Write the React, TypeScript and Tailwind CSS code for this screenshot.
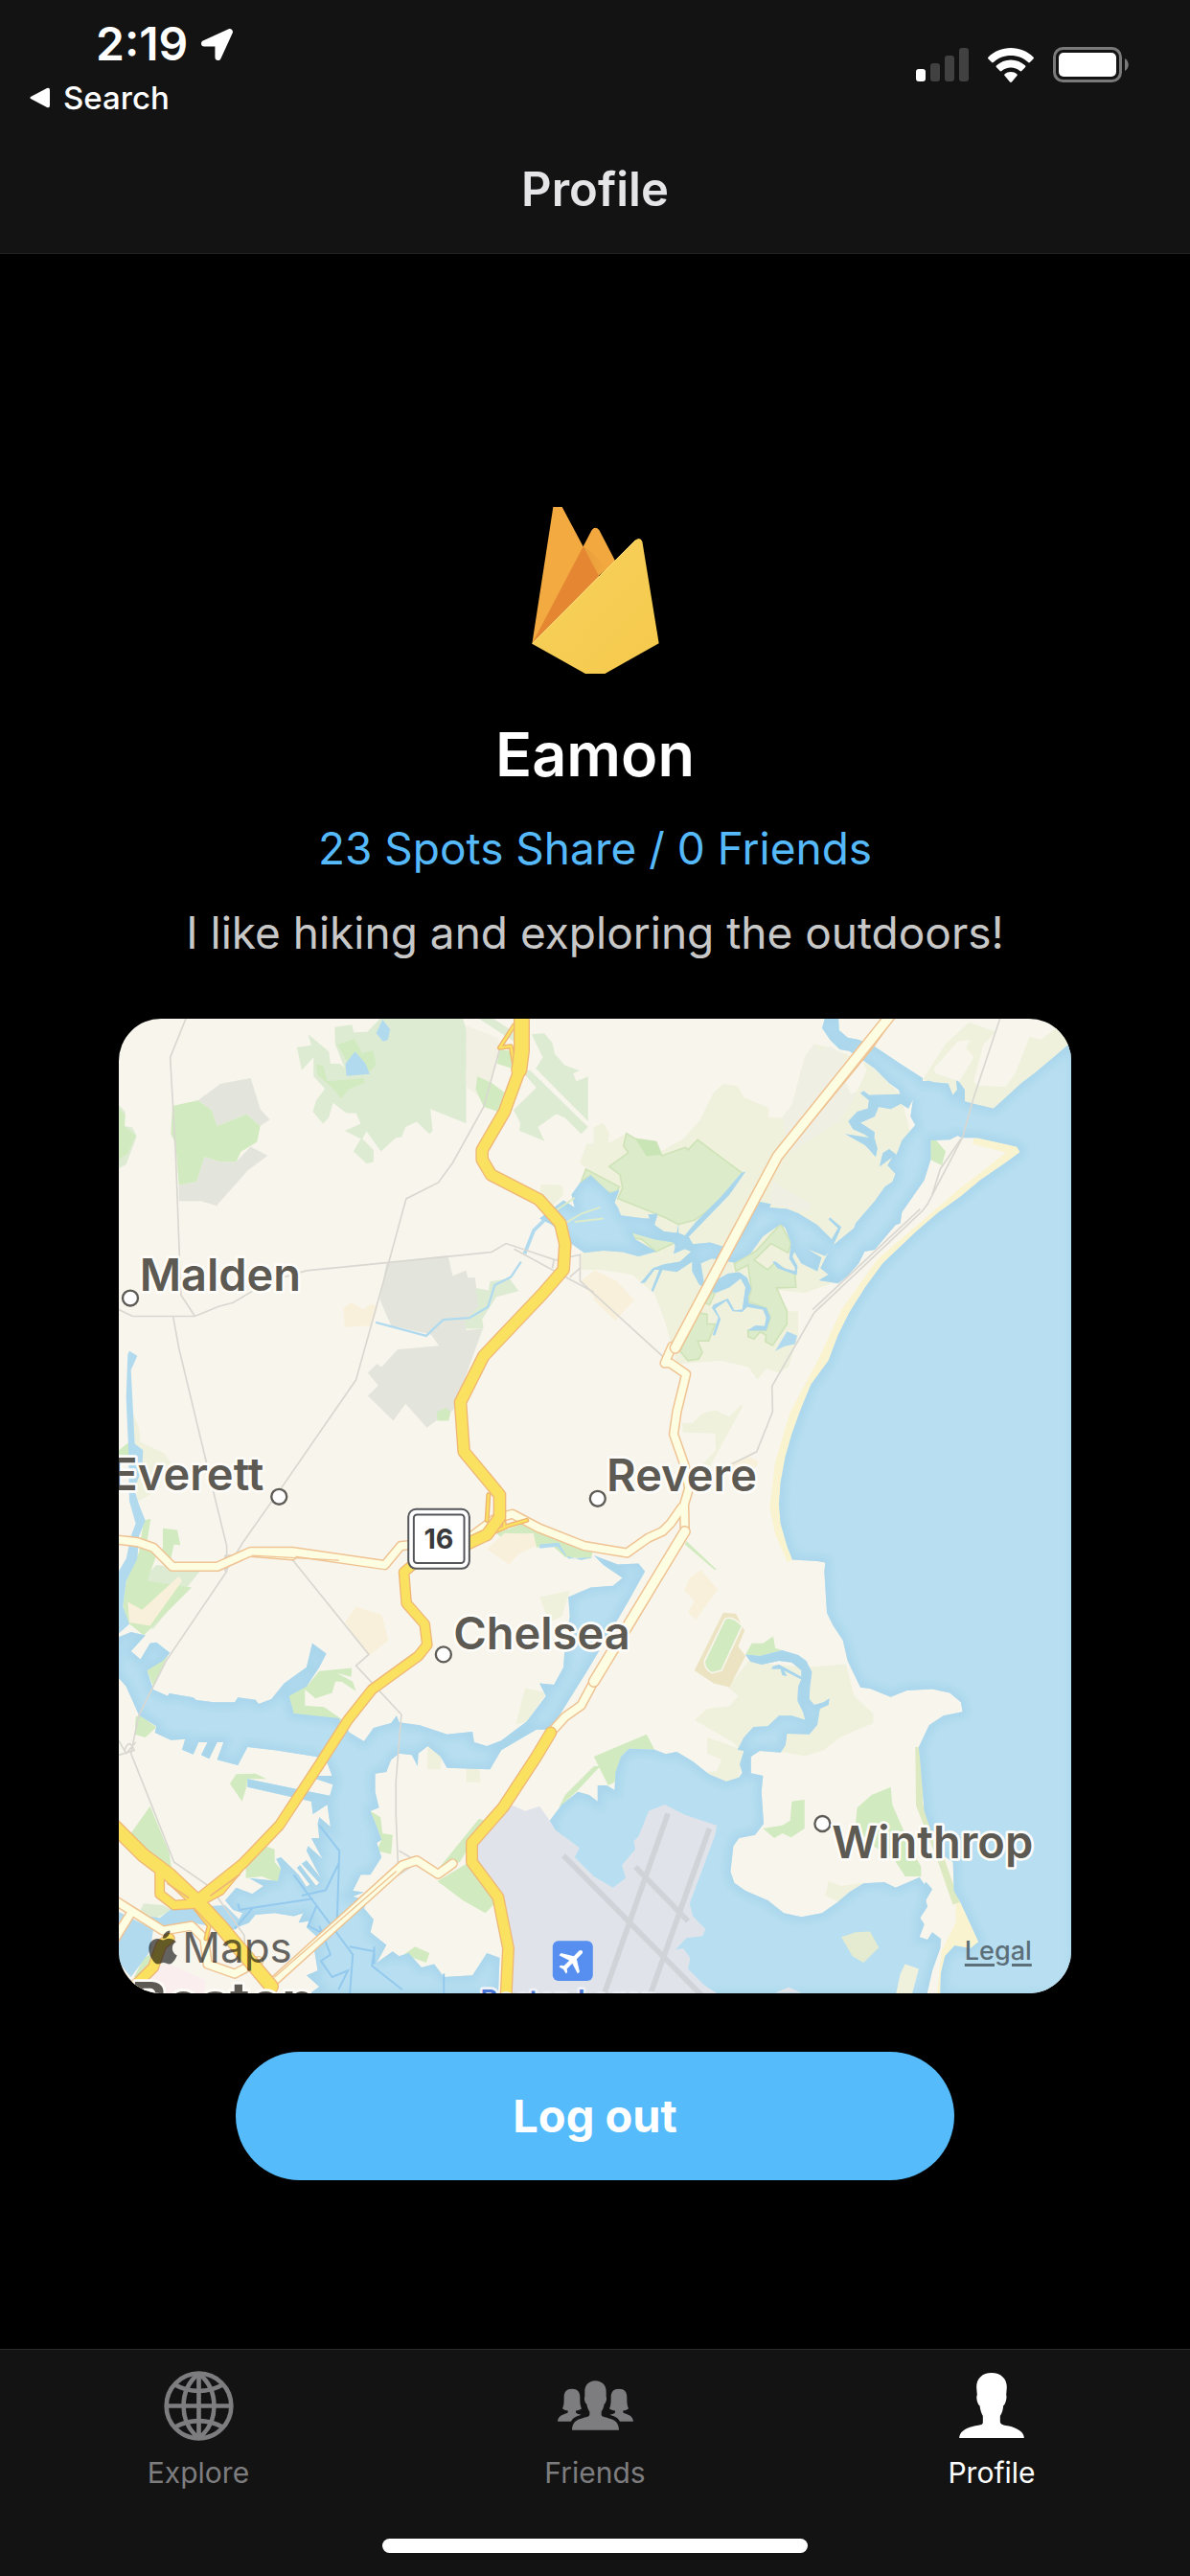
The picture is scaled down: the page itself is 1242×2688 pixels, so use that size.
import React from "react";
import { FaApple, FaLocationArrow } from "react-icons/fa";
import { MdFlight } from "react-icons/md";

function SignalIcon() {
  return (
    <svg viewBox="0 0 55 35" className="h-[35px] w-[55px]" aria-hidden="true">
      <rect x="0" y="22" width="10" height="13" rx="3" fill="#fff" />
      <rect x="15" y="16" width="10" height="19" rx="3" fill="#414141" />
      <rect x="30" y="8" width="10" height="27" rx="3" fill="#414141" />
      <rect x="45" y="0" width="10" height="35" rx="3" fill="#414141" />
    </svg>
  );
}

function WifiIcon() {
  return (
    <svg viewBox="0 0 48 36" className="h-[36px] w-[48px]" aria-hidden="true" fill="#fff">
      <path d="M24 0C15 0 6.700 3.500.600 9.400c-.700.700-.700 1.500-.100 2.100l3.600 3.600c.500.500 1.200.500 1.700 0C10.600 10.600 17 8 24 8s13.400 2.600 18.200 7.100c.500.500 1.200.500 1.700 0l3.600-3.600c.600-.600.600-1.400-.100-2.100C41.300 3.500 33 0 24 0z" />
      <path d="M24 12.400c-5.700 0-11 2.200-14.900 5.800-.700.600-.700 1.400-.100 2l3.700 3.800c.500.500 1.200.500 1.800 0C17 21.700 20.300 20.400 24 20.400s7 1.300 9.500 3.600c.600.500 1.300.500 1.800 0l3.700-3.800c.600-.600.600-1.400-.100-2C35 14.600 29.700 12.400 24 12.400z" />
      <path d="M24 25c-2.400 0-4.600.800-6.300 2.200-.700.500-.700 1.300-.100 1.900l5.400 6.400c.600.600 1.400.600 2 0l5.400-6.400c.600-.600.600-1.400-.100-1.900C28.600 25.800 26.400 25 24 25z" />
    </svg>
  );
}

function BatteryIcon() {
  return (
    <svg viewBox="0 0 79 37" className="h-[37px] w-[79px]" aria-hidden="true">
      <rect x="1.500" y="1.500" width="69" height="34" rx="9" fill="none" stroke="#7a7a7a" strokeWidth="3" />
      <rect x="6" y="6" width="60" height="25" rx="5" fill="#fff" />
      <path d="M75 12c5 3 5 10 0 13z" fill="#7a7a7a" />
    </svg>
  );
}

function FlameLogo() {
  return (
    <svg viewBox="0 0 399 522" className="h-[174px] w-[133px]" role="img" aria-label="Profile picture">
      <defs>
        <linearGradient id="sun" x1="0" y1="0" x2="1" y2="1">
          <stop offset="0" stopColor="#f8d15c" />
          <stop offset="1" stopColor="#f5c94c" />
        </linearGradient>
        <linearGradient id="fold" x1="0" y1="0" x2="1" y2="0">
          <stop offset="0" stopColor="#e0973a" />
          <stop offset="1" stopColor="#f2a93f" />
        </linearGradient>
      </defs>
      <path d="M67 0H95L212 220 1 428z" fill="#f2aa41" />
      <path d="M161 124L188 72Q199 58 211 72L262 170 205 220z" fill="#f2a83e" />
      <path d="M161 124L186 140 236 192 209 216z" fill="url(#fold)" opacity=".6" />
      <path d="M161 124L210 215 1 428z" fill="#e58732" />
      <path d="M1 428L324 104Q339 92 346 108L398 427 229 522H168z" fill="url(#sun)" />
      <path d="M2 427L325 104" stroke="#fbdc7c" strokeWidth="3" />
    </svg>
  );
}

const GRAY = "#7d7d7f";

function GlobeIcon() {
  return (
    <svg viewBox="0 0 220 220" className="h-[73px] w-[73px]" fill="none" stroke={GRAY} strokeWidth="14" aria-hidden="true">
      <circle cx="110" cy="110" r="102" />
      <path d="M110 8V212M8 110H212" />
      <path d="M110 8C46 60 46 160 110 212M110 8C174 60 174 160 110 212" />
      <path d="M33 42C80 70 140 70 187 42M33 178C80 150 140 150 187 178" />
    </svg>
  );
}

function FriendsIcon() {
  return (
    <svg viewBox="183 163 237 155" className="h-[52px] w-[79px]" fill={GRAY} aria-hidden="true">
      <path d="M301 163C280 163 267 178 268 198V213C265 218 268 233 274 237C276 247 279 256 283 260V270C282 275 278 276 262 280C240 284 228 296 228 318H375C375 296 363 284 341 280C325 276 321 275 320 270V260C324 256 327 247 329 237C335 233 338 218 335 213V198C336 178 322 163 301 163z" />
      <path d="M228 189C211 189 203 199 203 214C203 230 203 240 198 250C204 255 209 256 215 257V263C205 269 184 270 183 291H225C231 280 240 275 257 270C248 267 241 266 240 262V257C248 256 253 254 258 250C253 240 253 230 253 214C253 199 245 189 228 189z" />
      <path transform="translate(603 0) scale(-1 1)" d="M228 189C211 189 203 199 203 214C203 230 203 240 198 250C204 255 209 256 215 257V263C205 269 184 270 183 291H225C231 280 240 275 257 270C248 267 241 266 240 262V257C248 256 253 254 258 250C253 240 253 230 253 214C253 199 245 189 228 189z" />
    </svg>
  );
}

function PersonIcon() {
  return (
    <svg viewBox="180 138 203 204" className="h-[68px] w-[68px]" fill="#fff" aria-hidden="true">
      <path d="M281 138C252 138 234 156 234 183L236 207C232 212 236 235 244 241C246 255 249 265 254 273V293C254 300 246 301 236 303C208 307 180 320 180 342H383C383 320 354 307 326 303C316 301 308 298 308 290V273C314 265 317 255 318 241C326 235 330 212 327 207L329 183C329 156 310 138 281 138z" />
    </svg>
  );
}

/* Map geometry: one unit is a third of a pixel at the card's natural size. */
const OCEAN =
  "M3010 70L2940 130 2880 180 2840 210 2752 290 2690 275 2662 268 2662 232 2645 208 2635 202 2638 232 2624 248 2610 212 2565 208 2550 203 2530 205 2530 195 2460 150 2400 110 2370 90 2330 75 2295 68 2268 45 2266 0 2226 0 2215 38 2240 75 2270 105 2300 110 2345 140 2380 165 2425 210 2455 232 2460 245 2362 248 2345 235 2335 242 2362 265 2358 290 2325 300 2297 330 2312 355 2350 372 2362 382 2287 370 2350 405 2383 442 2388 415 2378 380 2380 365 2335 335 2380 315 2392 285 2430 292 2462 275 2485 290 2500 262 2492 315 2507 342 2465 390 2448 435 2425 417 2405 430 2395 472 2435 443 2420 468 2445 495 2435 520 2412 535 2380 580 2320 650 2315 665 2250 718 2275 662 2240 632 2235 637 2265 665 2245 700 2200 655 2140 618 2105 605 2050 600 2055 590 2020 582 1950 690 1902 722 1865 710 1810 715 1797 692 1925 560 1975 488 1962 492 1900 565 1820 645 1785 688 1765 680 1765 652 1760 680 1720 675 1690 655 1700 620 1670 622 1675 635 1660 635 1585 625 1575 600 1565 585 1580 545 1550 555 1490 500 1455 525 1430 560 1440 600 1405 578 1330 635 1370 655 1410 700 1470 742 1530 735 1590 740 1640 753 1695 738 1630 700 1620 680 1690 700 1750 710 1755 720 1750 745 1785 730 1805 738 1770 770 1720 778 1685 790 1645 838 1660 835 1690 795 1705 795 1680 860 1685 865 1715 795 1760 802 1808 770 1808 800 1830 842 1880 868 1925 850 1960 822 1975 850 1965 920 1940 922 1920 885 1875 905 1870 915 1890 945 1872 1000 1880 1000 1897 950 1880 917 1915 892 1935 925 1965 927 1980 912 2030 920 2040 945 2035 972 2005 970 1982 985 2040 985 2053 945 2040 915 1985 900 1983 880 1993 855 1980 820 1955 803 1920 807 1880 830 1845 835 1835 775 1870 760 1940 773 1990 745 2030 690 2085 652 2100 665 2118 712 2112 760 2130 788 2130 800 2095 790 2070 770 2060 770 2075 790 2135 812 2138 785 2122 755 2128 738 2150 775 2200 800 2213 757 2168 730 2225 752 2235 740 2210 790 2235 810 2205 828 2265 838 2295 815 2330 775 2348 738 2380 732 2445 655 2460 650 2465 615 2535 515 2555 450 2555 390 2615 388 2640 375 2652 382 2700 382 2825 410 2835 427 2790 460 2710 515 2650 565 2580 615 2510 675 2405 775 2350 850 2300 930 2265 1000 2235 1080 2180 1155 2145 1240 2120 1310 2100 1380 2085 1460 2080 1530 2085 1590 2105 1660 2122 1703 2200 1708 2225 1712 2222 1740 2230 1870 2250 1910 2280 1955 2295 2020 2335 2103 2365 2107 2430 2133 2480 2113 2560 2108 2615 2120 2650 2150 2655 2180 2595 2192 2550 2222 2518 2290 2523 2340 2535 2490 2580 2620 2625 2650 2628 2740 2650 2780 2705 2900 2680 2920 2630 2912 2600 2945 2587 3000 2585 3070 3010 3070z";

const BAY =
  "M1362 2520L1400 2470 1450 2430 1485 2440 1512 2460 1512 2410 1540 2410 1565 2425 1568 2370 1585 2320 1610 2295 1690 2298 1725 2312 1760 2305 1810 2335 1860 2375 1915 2398 1955 2385 1965 2370 1957 2345 1970 2302 1950 2298 1970 2260 2000 2227 2045 2225 2080 2192 2120 2192 2162 2205 2155 2180 2138 2145 2140 2100 2150 2078 2095 2050 2105 2068 2090 2065 2085 2045 2057 2045 2060 2038 2080 2032 2150 2070 2150 2050 2120 2025 2080 2020 2025 2032 1990 2022 1975 2000 2020 2005 2090 1987 2140 2002 2165 2020 2183 2055 2177 2100 2175 2140 2190 2158 2220 2150 2238 2138 2235 2158 2208 2170 2200 2220 2175 2250 2105 2248 2100 2285 2085 2307 2020 2302 1992 2320 1992 2372 2030 2380 2025 2430 2032 2530 2005 2565 1955 2575 1937 2600 1928 2680 1940 2715 1975 2740 2045 2770 2095 2810 2150 2822 2215 2810 2265 2775 2300 2745 2345 2717 2410 2713 2445 2730 2520 2698 2535 2720 2540 2712 2560 2735 2540 2770 2545 2790 2522 2825 2535 2845 2520 2885 2545 2893 2560 2870 2587 2890 2585 2920 2560 2990 2542 3070 1300 3070 1400 2700z";

const HARBOR =
  "M0 1950L50 1930 95 1940 50 1990 80 2015 110 1965 130 1962 172 1995 150 2020 100 2050 120 2110 165 2130 170 2122 245 2135 255 2143 310 2150 375 2150 385 2135 440 2142 450 2155 490 2140 530 2090 600 2040 618 1965 662 1997 640 2040 600 2100 545 2130 560 2185 700 2200 735 2245 780 2272 810 2230 865 2215 882 2192 890 2213 955 2222 1040 2250 1120 2242 1125 2275 1165 2287 1210 2270 1290 2210 1350 2130 1330 2090 1375 2095 1405 2040 1410 1960 1425 1880 1420 1820 1490 1790 1560 1785 1590 1760 1530 1720 1500 1690 1575 1718 1640 1715 1660 1740 1610 1830 1575 1890 1480 2050 1380 2210 1365 2235 1320 2235 1210 2300 1175 2360 1040 2355 1020 2320 980 2287 950 2310 948 2350 930 2315 890 2310 865 2330 850 2368 815 2373 815 2430 827 2480 800 2490 820 2540 835 2580 820 2590 835 2635 800 2690 770 2690 745 2740 780 2745 745 2758 790 2770 780 2795 810 2830 800 2870 850 2910 820 2965 870 2930 890 2945 920 2935 960 2980 1000 2970 1030 3010 1120 3005 1165 2935 1205 2950 1200 3070 600 3070 640 3040 600 3005 635 2990 625 2930 640 2890 600 2855 610 2835 575 2840 590 2810 560 2820 500 2810 440 2815 420 2840 370 2860 400 2810 370 2800 345 2770 380 2730 430 2750 465 2725 420 2700 510 2710 520 2670 505 2640 520 2635 575 2690 600 2728 610 2720 570 2668 580 2660 630 2725 640 2715 585 2655 600 2645 645 2700 600 2615 605 2600 650 2640 615 2575 640 2575 635 2530 640 2510 675 2540 665 2470 620 2500 615 2460 415 2415 415 2390 560 2420 673 2442 683 2408 630 2390 635 2380 680 2380 665 2340 630 2320 500 2300 415 2290 385 2347 320 2330 340 2275 320 2275 295 2327 270 2315 290 2275 262 2275 245 2313 210 2298 220 2265 175 2268 125 2245 130 2225 75 2190 35 2100 0 2060z";

const RIVERS =
  "M45 1050L70 1065 50 1110 62 1340 88 1360 85 1420 60 1480 75 1530 95 1580 75 1630 70 1700 35 1770 25 1850 45 1905 0 1945V1760L35 1700 50 1630 65 1590 45 1520 42 1350 35 1195 40 1060z M80 2815L140 2825 180 2795 345 2785 390 2830 370 2865 240 2840 150 2870z M0 2800L120 2860 110 2930 50 3010 0 2950z M838 12L862 42 855 75 840 80 818 55z M752 112L785 150 798 182 725 188 722 150z M2105 988L2137 1002 2130 1028 2098 1035 2068 1050z M1330 1655L1390 1650 1420 1700 1500 1695 1460 1705 1410 1690 1385 1662 1330 1668z";

const WOODS =
  "M570 98L615 92 605 58 670 112 675 150 705 150 720 165 690 90 688 35 742 28 748 52 790 50 830 9 1090 9 1103 50 1100 110 1122 138 1100 170 1100 337 988 292 995 360 985 370 945 332 910 348 898 380 880 382 833 425 788 362 775 385 810 420 810 458 788 462 747 425 770 385 720 360 770 338 755 305 725 305 683 272 670 318 652 338 620 300 630 265 658 228 622 190 622 130 585 170z M1305 58L1345 55 1370 85 1378 120 1410 155 1455 172 1435 180 1445 205 1482 190V330L1318 165 1340 130z M1272 170L1300 170 1482 348 1460 370 1410 320 1382 308 1325 348 1345 392 1267 360 1270 335 1248 295 1320 225z M1140 9L1185 9 1250 50 1250 80z M1120 850L1170 860 1175 832 1235 822 1265 862 1195 880 1150 950 1155 980 1090 980z M12 280L32 300 30 345 55 350 68 378 35 465 12 478z M75 2810L90 2780 150 2785 180 2800 130 2825z M100 1750L130 1720 270 1735 120 1920 60 1910z";

const MARSH =
  "M1500 400L1545 400 1600 370 1700 430 1780 385 1830 330 1875 240 1905 213 1950 220 1970 255 2048 288 2048 320 2090 318 2120 280 2160 130 2190 88 2240 100 2340 140 2380 165 2425 210 2460 245 2500 400 2400 600 2240 840 2160 867 2080 860 2105 925 2140 925 2140 1000 2110 1100 2080 1118 2040 1105 2012 1140 1985 1100 1900 1080 1760 1090 1720 950 1690 870 1620 810 1520 795 1460 795 1460 742 1500 735 1480 480 1455 460 1478 400z M1500 350L1528 335 1548 365 1545 420 1500 435z M2530 200L2600 90 2675 20 2760 50 2720 90 2690 205 2700 218 2790 222 2820 180 2865 65 2900 75 2960 30 3000 9V80L2752 292 2662 268z M1775 1275L1810 1275 1840 1245 1880 1235 1925 1255 1960 1218 1967 1222 1865 1408 1840 1405 1882 1360 1880 1308 1780 1305z M1815 2205L1855 2170 1925 2162 1952 2130 1920 2102 1985 2020 2060 2030 2165 2040 2290 2030 2315 2130 2375 2185 2375 2215 2270 2260 2220 2300 2160 2318 2085 2305 1960 2300 1935 2275z M1855 2260L1900 2275 1968 2300 1955 2385 1915 2400 1840 2370 1885 2365 1900 2330 1855 2310z M2235 2710L2275 2725 2345 2715 2300 2750 2265 2775 2225 2755z M1285 2105L1352 2120 1290 2210 1255 2220z M1330 1820L1425 1800 1400 1880 1360 1900z M55 1240L75 1290 80 1335 155 1370 175 1400 110 1500 70 1520z M1335 528L1400 530 1405 560 1365 600 1330 560z M980 2285L1025 2290 1020 2360 978 2360z M1100 2340L1140 2345 1145 2400 1100 2400z";

const PARKS =
  "M180 282L260 265 302 295 320 345 412 308 455 345 445 395 395 425 380 457 330 457 280 442 255 520 200 530 190 400 175 370z M697 90L750 72 775 118 808 108 818 152 798 175 765 140 725 140z M630 152L652 155 665 205 780 195 783 210 735 228 708 258 680 225 635 185z M1205 105L1240 110 1245 165 1197 150z M1135 190L1180 210 1220 240 1200 300 1155 285 1130 230z M12 290L32 310 30 345 65 375 40 430 12 450z M1008 1240L1035 1228 1052 1240 1045 1268 1010 1268z M12 1360L45 1335 45 1380 12 1390z M150 1605L195 1610 205 1658 185 1655 175 1700 130 1690 100 1770 240 1790 90 1940 40 1900 25 1850 35 1770 75 1680 90 1580 112 1575 100 1650 150 1670z M172 1990L120 2100 100 2050z M545 2120L605 2095 640 2052 742 2042 740 2070 695 2058 745 2085 755 2115 710 2085 690 2085 680 2120 628 2138 595 2110 595 2160 655 2165 720 2210 570 2198 538 2160z M65 2195L80 2192 130 2228 95 2260 62 2250z M360 2405L380 2375 440 2373 475 2390 415 2390 412 2415 398 2460z M50 2560L110 2475 170 2620 180 2690 60 2580z M410 2640L470 2600 500 2610 500 2650 522 2675 510 2715 460 2695 410 2700z M800 2490L832 2510 838 2560 870 2565 865 2625 820 2615 835 2580z M1010 2675L1140 2515 1160 2520 1080 2650z M1010 2710L1110 2650 1200 2770 1160 2810 1090 2770z M905 2940L940 2915 985 2935 975 2965z M60 3010L90 2950 130 2930 115 3010z M1195 1620L1280 1590 1370 1625 1500 1670 1490 1700 1410 1695 1370 1660 1320 1665 1310 1620 1210 1635z M2555 390L2570 387 2602 425 2590 468 2553 450z M1500 2320L1665 2250 1690 2298 1610 2295 1585 2320 1565 2400 1545 2410z M1390 2480L1410 2440 1500 2350 1520 2350 1450 2425z M1975 2000L1995 1965 2030 1965 2062 1943 2068 1980 2090 1987 2020 2005z M2120 2460L2160 2455 2160 2545 2118 2573 2090 2560 2065 2575 2030 2545 2090 2535 2115 2520z M2325 2480L2370 2440 2430 2415 2435 2470 2500 2620 2525 2665 2525 2695 2475 2695 2440 2640 2360 2590 2320 2530z M1790 1645L1885 1735 1878 1735 1785 1655z";

const BOG =
  "M1602 368L1630 385 1695 395 1713 438 1787 412 1795 420 1825 388 1965 493 1900 580 1815 640 1765 653 1720 630 1575 572 1590 540 1582 498 1548 472 1608 428 1593 408z M2085 652L2118 712 2108 742 2055 713 2002 765 2045 795 2065 775 2130 810 2133 850 2072 852 2105 925 2105 965 2060 1032 2037 1020 2040 1000 2020 990 2002 1012 1983 1005V985L2040 985 2053 945 2040 915 1983 895 1993 855 1983 780 1945 800 1940 775 2010 735z M1625 658L1680 670 1755 710 1695 738 1650 700 1620 695z M1830 930L1855 935 1855 965 1880 965 1860 1018 1825 1018 1840 1055 1828 1075 1795 1080 1770 1050z M1475 480L1580 535 1570 555 1540 550 1490 500 1460 520z M1850 900L1870 865 1878 872 1862 905z";

const CEMETERIES =
  "M260 265L330 213 425 195 455 292 485 325 455 345 412 308 320 345 302 295z M200 530L255 520 280 442 330 457 380 457 425 410 478 438 415 485 318 595 270 580 200 580z M850 772L1043 750 1058 815 1100 797 1105 820 1128 820 1138 910 1095 955 1100 985 1152 980 1060 1235 1010 1265 977 1290 910 1215 872 1268 792 1190 825 1158 792 1118 820 1090 835 1100 885 1045 1015 1033 990 998 865 970 830 890z";

const BLOCKS =
  "M715 918L738 897 780 920 800 902 825 908 805 970 720 975z M720 1900L755 1850 835 1875 857 1955 795 2005z M1165 1670L1220 1620 1310 1622 1320 1660 1265 1685 1235 1718z M40 1835L85 1860 200 1755 210 1770 110 1910 45 1900z M1500 795L1570 830 1627 890 1567 955 1500 890z M1460 830L1500 800V880L1470 850z M1783 1800L1800 1760 1835 1735 1888 1797 1820 1890 1795 1870 1815 1832z M1925 1400L1980 1380 2015 1395 2010 1410 1970 1440 1930 1455z";

const AIRPORT =
  "M1240 2470L1285 2490 1330 2475 1362 2520 1380 2550 1455 2605 1440 2635 1500 2695 1560 2730 1600 2700 1588 2660 1630 2610 1625 2585 1640 2570 1672 2490 1722 2470 1785 2502 1885 2535 1880 2565 1800 2780 1810 2820 1850 2860 1840 2882 1790 2888 1755 2925 1780 2920 1802 2950 1795 2985 1845 3035 1900 3070H1220L1232 2910 1200 2760 1118 2650V2590z";

const RAILS = [
  "M222 9L173 130 190 430 203 780 207 875 250 940",
  "M12 920L55 941H250L325 910 370 898 480 833 600 798 850 773 1180 740 1225 713 1380 765 1457 748V830L1500 870 1720 1070",
  "M182 941L200 1040 318 1530 350 1660 350 1740 160 2020 75 2190 50 2310 110 2460 185 2650 300 2730 405 2880 410 3000",
  "M1205 105L1155 285 1058 460 1013 522 912 573 850 800 755 1140 520 1480 400 1650 350 1735",
  "M1250 730L1415 820 1500 865",
  "M2775 0L2690 255 2655 380 2545 590 2530 610 2190 930 2058 1160 2060 1240 2010 1365 1880 1430",
  "M2650 385L2585 480 2560 560",
  "M2522 605L2185 920",
  "M545 1690L795 2000 755 2035 897 2188 880 2400 880 2500 888 2690 950 2650 890 2615",
  "M1370 790L1375 765 M1425 818L1457 790",
];

const FERRIES =
  "M640 2535L703 2615 695 2850 M703 2650L660 2738 585 2755 M385 2780L390 2800 620 2765 M430 2795L375 2860 M560 2690L745 2940 735 3070 M630 2790L605 2850 675 2885 M640 2850L675 2940 645 2960 680 3010 730 2990 700 3050 M735 2915L812 2930 805 2975 900 3050 M812 2915V2970 M1030 3000V3070";

const LOCAL_ROADS = [
  "M2428 0L2360 95 2075 440 1910 750 1755 1040",
  "M1745 1035L1722 1088 1740 1088 1789 1122 1760 1240 1750 1310 1785 1410 1798 1480 1783 1530 1785 1615 1600 1925 1500 2085 1460 2160 1410 2195 1365 2245",
  "M0 1640L70 1648 120 1665 180 1725 320 1725 425 1678 555 1678 845 1720 895 1660 950 1655",
  "M555 1690L425 1680",
  "M1110 1635L1190 1575 1245 1560 1330 1605 1470 1660 1604 1682 1670 1635 1715 1615 1740 1590 1775 1540",
  "M485 3035L900 2660 945 2645 1012 2688 1058 2655",
  "M0 2770L55 2805 150 2865 240 2850 280 2890 290 2970 375 3000 450 2960",
  "M50 2810L0 2890",
];

const HIGHWAYS = [
  { d: "M1274 0V120L1262 185 1220 300 1150 420V450L1178 498 1328 575 1395 650 1410 715 1405 795 1340 870 1155 1065 1082 1210 1093 1365 1205 1500V1570L1165 1625 1100 1655", w: 34 },
  { d: "M1274 0V110L1266 170", w: 44 },
  { d: "M950 1705L905 1742 913 1840 970 1905 978 1970 950 2005 805 2110 730 2205 640 2345 515 2535 400 2655 255 2770", w: 28 },
  { d: "M400 2655L330 2740 265 2775", w: 24 },
  { d: "M1365 2245L1320 2320 1215 2480 1118 2590V2650L1200 2760 1232 2920 1225 3070", w: 32 },
  { d: "M0 2540L90 2630 170 2690 255 2770 330 2850 490 3040", w: 40 },
  { d: "M140 2680V2750L185 2785 260 2780", w: 26 },
  { d: "M60 3040L120 2980 145 2910 170 2890", w: 30 },
];

const RAMPS = "M1250 30L1205 100 1240 95 1250 150 M1170 1500L1165 1580 M1210 1500L1220 1600 1290 1580 M1225 1600L1190 1615 M240 2780L295 2850 285 2890";

function Town({ name, x, y, cx, cy }: { name: string; x: number; y: number; cx: number; cy: number }) {
  return (
    <g>
      <circle cx={cx} cy={cy} r="24" fill="#fff" stroke="#5f5c57" strokeWidth="7" paintOrder="normal" />
      <text x={x} y={y}>{name}</text>
    </g>
  );
}

function MapCard() {
  return (
    <section aria-label="Map" className="relative mt-[60px] aspect-[994/1017] w-4/5 overflow-hidden rounded-[44px] bg-[#f8f5ec]">
      <svg viewBox="12 9 2982 3051" preserveAspectRatio="xMidYMid slice" className="block h-full w-full">
        <defs>
          <clipPath id="sea">
            <path d={OCEAN} />
            <path d={BAY} />
            <path d={HARBOR} />
          </clipPath>
          <filter id="soft" x="-10%" y="-10%" width="120%" height="120%">
            <feGaussianBlur stdDeviation="14" />
          </filter>
        </defs>

        <path d={WOODS} fill="#ddebd3" />
        <path d="M1100 30L1200 70 1205 110 1160 270 1100 220z" fill="#f2efe3" />
        <path d={CEMETERIES} fill="#e3e4dc" />
        <path d={MARSH} fill="#f0f1dc" />
        <path d="M2160 130L2190 88 2210 110 2240 95 2280 120 2320 250 2270 330 2110 430 2090 318 2120 280z M2060 520L2180 590 2170 615 2050 590z" fill="#f0efe4" />
        <path d="M2340 140L2355 170 2325 235 2305 245 2290 210z M2565 165L2640 80 2680 75 2665 100 2690 130 2645 205 2570 180z" fill="#f8f5ec" />
        <path d={PARKS} fill="#d1eabf" />
        <path d={BOG} fill="#dcebc9" stroke="#cfe3b8" strokeWidth="5" />
        <path d="M1630 385L1695 395 1713 435 1665 440z" fill="#c9e5b5" />
        <path d={BLOCKS} fill="#f8f0da" />
        <path d="M125 2990L160 2965 285 3020 280 3070H100z" fill="#fbeeee" />
        <path d="M1905 1870L1945 1872 1972 1925 1952 1975 1975 2005 1925 2102 1875 2090 1815 2050z" fill="#ebe3c1" />
        <path d="M1910 1890Q1930 1875 1965 1910L1900 2050 1870 2058Q1845 2045 1847 2020z" fill="#d1eabf" stroke="#f8f5ec" strokeWidth="5" />
        <path d="M2690 385L2830 420 2650 560 2400 775 2290 930 2220 1080 2130 1250 2085 1400 2068 1540 2085 1620 2122 1705" fill="none" stroke="#f9f3d0" strokeWidth="34" strokeLinejoin="round" />
        <path d="M2640 2775L2710 2905 2680 2920 2620 2910 2580 3070 2595 2930 2640 2840z" fill="#f9f3d0" stroke="#f9f3d0" strokeWidth="12" />
        <path d="M2518 2290L2520 2470 2590 2650 2635 2780" fill="none" stroke="#dde9c0" strokeWidth="22" />

        <path d={RIVERS} fill="#b1daee" />
        <g clipPath="url(#sea)">
          <rect width="3010" height="3080" fill="#b8dff1" />
          <g fill="none" stroke="#a9d5eb" strokeWidth="34" filter="url(#soft)">
            <path d={OCEAN} />
            <path d={BAY} />
            <path d={HARBOR} />
          </g>
        </g>
        <path d="M817 960L975 1002 1028 952 1110 946 1168 912 1190 843 1240 818 1272 770" fill="none" stroke="#b1daee" strokeWidth="7" />
        <path d="M1283 745L1312 672 1345 640" fill="none" stroke="#b1daee" strokeWidth="11" />
        <path d="M1380 610L1440 570M1410 650L1460 620 1520 600M1440 645L1530 635" fill="none" stroke="#dcebc9" strokeWidth="6" />
        <path d="M2275 2885L2320 2870 2365 2868 2393 2918 2345 2965 2310 2945z" fill="#e4ebd0" />
        <path d="M2475 2970L2518 2985 2495 3070H2445L2460 3000z" fill="#f0f1dc" />
        <path d="M2068 3060L2110 3042 2150 3060z" fill="#e0e4ea" />
        <path d={FERRIES} fill="none" stroke="#94c9ee" strokeWidth="6" />
        <path d={AIRPORT} fill="#e0e4ea" />
        <path d="M1405 2630L1840 3070M1630 2665L1795 2835M1732 2498L1530 3070M1862 2545L1675 3070" fill="none" stroke="#d0d3d8" strokeWidth="17" />

        <g fill="none" stroke="#d9d7d1" strokeWidth="5">
          {RAILS.map((d) => <path key={d} d={d} />)}
          <path d="M12 2270L35 2310 65 2275M30 2300Q45 2260 60 2300L12 2315M345 1690H400M345 1690V1740" />
        </g>

        <g fill="none" strokeLinejoin="round" strokeLinecap="round">
          {LOCAL_ROADS.map((d) => <path key={d} d={d} stroke="#efc393" strokeWidth="32" />)}
          {LOCAL_ROADS.map((d) => <path key={d} d={d} stroke="#fdfde1" strokeWidth="23" />)}
          <path d="M1785 1615L1500 2085M2428 0L2075 440 1755 1040" stroke="#efc393" strokeWidth="37" />
          <path d="M1785 1615L1500 2085M2428 0L2075 440 1755 1040" stroke="#fdfde1" strokeWidth="28" />
          <path d="M430 1690L700 1705M500 3010L880 2680" stroke="#efc393" strokeWidth="4" />
          <path d={RAMPS} stroke="#efb56f" strokeWidth="15" />
          <path d={RAMPS} stroke="#fae160" strokeWidth="7" />
          {HIGHWAYS.map((h) => <path key={h.d} d={h.d} stroke="#efb777" strokeWidth={h.w + 7} />)}
          {HIGHWAYS.map((h) => <path key={h.d} d={h.d} stroke="#fae160" strokeWidth={h.w - 1} />)}
          <path d="M165 2718L230 2762M390 2690L300 2755" stroke="#efb777" strokeWidth="5" />
        </g>

        <g fontFamily="Inter, 'Liberation Sans', sans-serif" fontSize="141" fontWeight="600" fill="#5d5a54" stroke="#fdfcf8" strokeWidth="16" strokeLinejoin="round" paintOrder="stroke">
          <Town name="Malden" x={77} y={861} cx={48} cy={884} />
          <Town name="Everett" x={-14} y={1486} cx={514} cy={1506} />
          <Town name="Revere" x={1540} y={1490} cx={1512} cy={1512} />
          <Town name="Chelsea" x={1060} y={1984} cx={1029} cy={2000} />
          <Town name="Winthrop" x={2246} y={2638} cx={2216} cy={2530} />
          <text x="52" y="3148" fontSize="168" fontWeight="700">Boston</text>
          <text x="1145" y="3112" fontSize="84" fill="#4a78d8" stroke="#eef1f8">Boston Logan</text>
        </g>

        <g>
          <rect x="919" y="1545" width="191" height="186" rx="24" fill="#fff" stroke="#55565a" strokeWidth="6" />
          <rect x="936" y="1562" width="158" height="152" rx="10" fill="#fff" stroke="#55565a" strokeWidth="6" />
          <text x="1014" y="1670" textAnchor="middle" fontFamily="Inter, sans-serif" fontSize="86" fontWeight="700" fill="#3a3a3c">16</text>
        </g>
        <rect x="1371" y="2897" width="126" height="125" rx="18" fill="#568ff0" />
        <g transform="translate(1434 2960) rotate(45)">
          <MdFlight x="-52" y="-52" size={104} color="#fff" />
        </g>
      </svg>
      <div className="absolute inset-x-0 bottom-0 flex items-end justify-between pb-[26px] pl-[26px] pr-[41px] text-black/60">
        <div className="flex items-center">
          <FaApple size={40} aria-hidden="true" />
          <span className="text-[44px] leading-[44px]">Maps</span>
        </div>
        <a href="#legal" className="text-[27px] font-medium leading-[36px] text-[#5c6f79] underline decoration-[3px] underline-offset-4">Legal</a>
      </div>
    </section>
  );
}

function Tab({ label, active, children }: { label: string; active?: boolean; children: React.ReactNode }) {
  return (
    <a
      href={"#" + label.toLowerCase()}
      aria-current={active ? "page" : undefined}
      className={"flex flex-1 flex-col items-center gap-[10px] text-[30px] leading-[40px] " + (active ? "text-white" : "text-[#7d7d7f]")}
    >
      <span className="flex h-[80px] items-center">{children}</span>
      {label}
    </a>
  );
}

export default function App() {
  return (
    <div className="flex min-h-screen flex-col bg-black font-[Inter,'Liberation_Sans',sans-serif] text-white">
      <header className="border-b border-[#232323] bg-[#131313] pb-9">
        <div className="flex items-start justify-between pl-[30px] pr-16 pt-4">
          <div>
            <div className="flex items-center gap-[14px] pl-[70px] text-[48px] font-semibold leading-[60px]">
              <span>2:19</span>
              <FaLocationArrow size={33} aria-hidden="true" />
            </div>
            <button type="button" className="mt-1.5 flex items-center gap-[14px] text-[33px] font-medium leading-[40px]">
              <svg viewBox="0 0 22 22" className="h-[22px] w-[22px]" fill="#fff" aria-hidden="true">
                <path d="M2 10L19 1Q22 0 22 3V19Q22 22 19 21L2 12Q.500 11 2 10z" />
              </svg>
              Search
            </button>
          </div>
          <div className="flex items-center gap-5 pt-[33px]">
            <SignalIcon />
            <WifiIcon />
            <BatteryIcon />
          </div>
        </div>
        <h1 className="mt-[46px] text-center text-[49px] font-semibold leading-[60px] text-[#e5e5e7]">Profile</h1>
      </header>

      <main className="flex flex-1 flex-col items-center pt-[264px]">
        <FlameLogo />
        <h2 className="mt-11 text-[63px] font-semibold leading-[80px]">Eamon</h2>
        <p className="mt-7 text-[46px] leading-[60px] text-[#55b9fa]">23 Spots Share / 0 Friends</p>
        <p className="mt-7 text-[46px] leading-[60px] text-[#c8c8c8]">I like hiking and exploring the outdoors!</p>
        <MapCard />
        <button type="button" className="mt-[61px] w-[750px] max-w-[80%] rounded-full bg-[#55bbfb] py-[37px] text-[47px] font-bold leading-[60px]">
          Log out
        </button>
      </main>

      <nav className="border-t border-[#2a2a2a] bg-[#131313] pb-6 pt-[18px]">
        <div className="flex">
          <Tab label="Explore"><GlobeIcon /></Tab>
          <Tab label="Friends"><FriendsIcon /></Tab>
          <Tab label="Profile" active><PersonIcon /></Tab>
        </div>
        <div className="mx-auto mt-[49px] h-[15px] w-[444px] rounded-full bg-white" />
      </nav>
    </div>
  );
}
